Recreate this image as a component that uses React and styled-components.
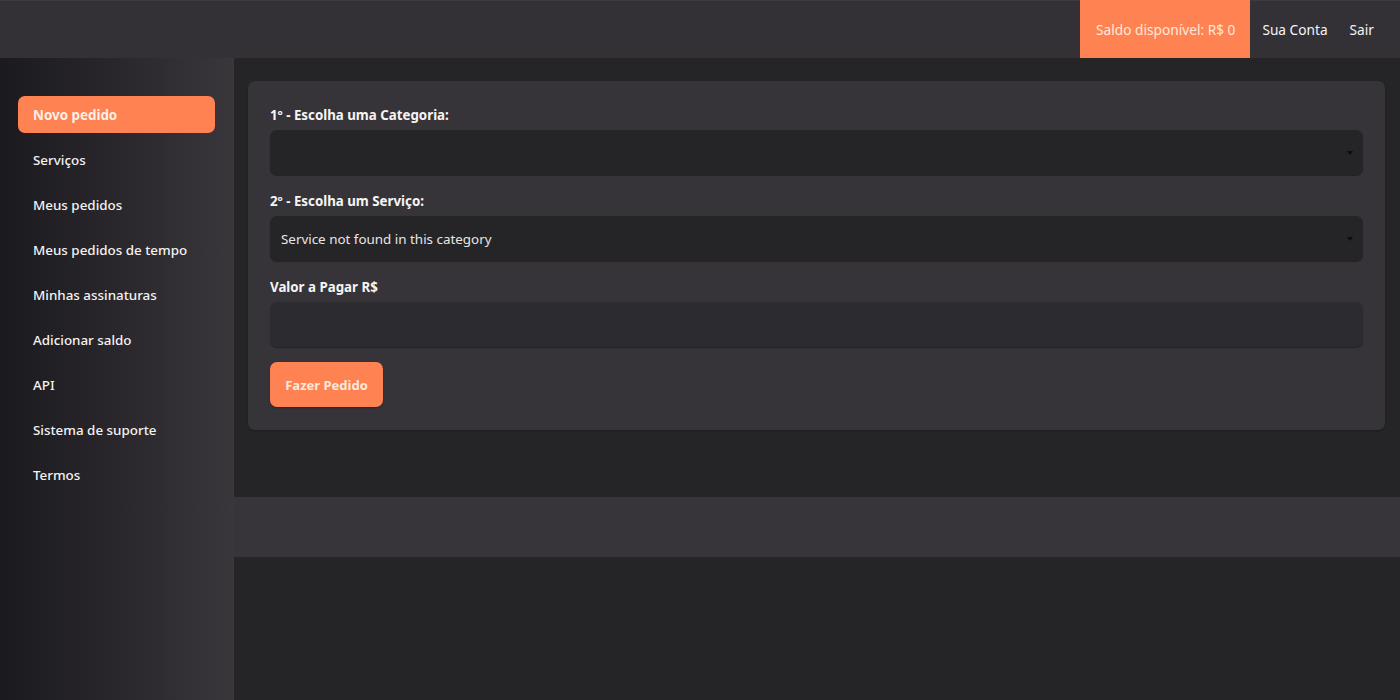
import React from "react";
import styled, { createGlobalStyle } from "styled-components";

const Global = createGlobalStyle`
  html, body { margin: 0; padding: 0; background: #252427; }
  body { font-family: "Noto Sans", "Open Sans", sans-serif; color: #f4f2f2; }
  * { box-sizing: border-box; }
`;

const Page = styled.div`
  width: 1400px;
  height: 700px;
  display: flex;
  flex-direction: column;
  background: #252427;
  overflow: hidden;
`;

const TopBar = styled.header`
  height: 58px;
  flex: none;
  background: #333136;
  border-top: 1px solid #3c3a3f;
  display: flex;
  justify-content: flex-end;
  align-items: stretch;
  padding-right: 15px;
`;

const Balance = styled.div`
  background: #ff8252;
  color: #fde9da;
  font-size: 13.7px;
  display: flex;
  align-items: center;
  padding: 0 15px 0 16px;
  margin-top: -1px;
  margin-right: 1px;
`;

const TopLink = styled.a`
  color: #f6f4f4;
  font-size: 13.7px;
  display: flex;
  align-items: center;
  padding: 0 11px;
  text-decoration: none;
`;

const Body = styled.div`
  flex: 1;
  display: flex;
`;

const Sidebar = styled.nav`
  width: 234px;
  flex: none;
  background: linear-gradient(90deg, #1b1a1e 0%, #29272c 50%, #39373c 100%);
  padding: 38px 19px 0 18px;
  display: flex;
  flex-direction: column;
  gap: 8px;
`;

const NavItem = styled.a`
  height: 37px;
  display: flex;
  align-items: center;
  padding: 0 15px;
  border-radius: 7px;
  font-size: 13.4px;
  font-weight: ${(p) => (p.$active ? 700 : 500)};
  color: ${(p) => (p.$active ? "#fdf0e6" : "#f4f2f2")};
  background: ${(p) => (p.$active ? "#ff8252" : "transparent")};
  text-decoration: none;
`;

const Main = styled.main`
  flex: 1;
  display: flex;
  flex-direction: column;
`;

const Content = styled.div`
  height: 439px;
  padding: 23px 15px 0 14px;
`;

const Card = styled.section`
  background: #363438;
  border-radius: 7px;
  padding: 24px 22px 23px 22px;
  display: flex;
  flex-direction: column;
  box-shadow: 0 1px 2px rgba(0, 0, 0, 0.25);
`;

const Label = styled.label`
  font-size: 13.3px;
  font-weight: 700;
  color: #f6f4f4;
  line-height: 20px;
  margin-bottom: 5px;
`;

const Field = styled.div`
  position: relative;
  height: 45px;
  flex: none;
  border-radius: 7px;
  background: ${(p) => (p.$light ? "#2c2b2f" : "#252427")};
  box-shadow: 0 1px 1px rgba(0, 0, 0, 0.35);
  display: flex;
  align-items: center;
  padding: 0 11px;
  font-size: 13.4px;
  color: #e8e6e6;
  margin-bottom: 16px;
`;

const Caret = styled.span`
  position: absolute;
  right: 10px;
  top: 21px;
  width: 0;
  height: 0;
  border-left: 3.5px solid transparent;
  border-right: 3.5px solid transparent;
  border-top: 4px solid #0c0c0e;
`;

const Button = styled.button`
  align-self: flex-start;
  height: 45px;
  width: 113px;
  border: none;
  border-radius: 7px;
  background: #ff8252;
  color: #fde9da;
  font-family: inherit;
  font-size: 13px;
  font-weight: 700;
  margin-top: -1px;
  box-shadow: 0 1px 2px rgba(0, 0, 0, 0.3);
`;

const FooterBand = styled.div`
  height: 60px;
  background: #37353a;
`;

const nav = [
  "Novo pedido",
  "Serviços",
  "Meus pedidos",
  "Meus pedidos de tempo",
  "Minhas assinaturas",
  "Adicionar saldo",
  "API",
  "Sistema de suporte",
  "Termos",
];

export default function App() {
  return (
    <Page>
      <Global />
      <TopBar>
        <Balance>Saldo disponível: R$ 0</Balance>
        <TopLink>Sua Conta</TopLink>
        <TopLink>Sair</TopLink>
      </TopBar>
      <Body>
        <Sidebar>
          {nav.map((n, i) => (
            <NavItem key={n} $active={i === 0}>
              {n}
            </NavItem>
          ))}
        </Sidebar>
        <Main>
          <Content>
            <Card>
              <Label>1º - Escolha uma Categoria:</Label>
              <Field>
                <Caret />
              </Field>
              <Label>2º - Escolha um Serviço:</Label>
              <Field>
                Service not found in this category
                <Caret />
              </Field>
              <Label>Valor a Pagar R$</Label>
              <Field $light />
              <Button>Fazer Pedido</Button>
            </Card>
          </Content>
          <FooterBand />
        </Main>
      </Body>
    </Page>
  );
}
